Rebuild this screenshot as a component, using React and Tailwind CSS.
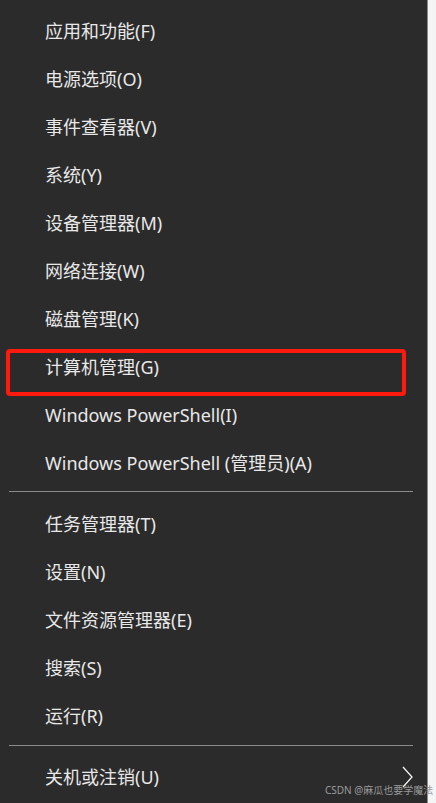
const groupA = [
  '应用和功能(F)',
  '电源选项(O)',
  '事件查看器(V)',
  '系统(Y)',
  '设备管理器(M)',
  '网络连接(W)',
  '磁盘管理(K)',
  '计算机管理(G)',
  'Windows PowerShell(I)',
  'Windows PowerShell (管理员)(A)',
]

const groupB = ['任务管理器(T)', '设置(N)', '文件资源管理器(E)', '搜索(S)', '运行(R)']

function Item({ label, children }) {
  return (
    <div className="relative h-[48px] flex items-center pl-[45px] text-[18px] text-[#e8e8e8]">
      <span>{label}</span>
      {children}
    </div>
  )
}

export default function App() {
  return (
    <div
      className="relative w-[436px] h-[803px] flex overflow-hidden"
      style={{ fontFamily: '"Noto Sans", "Noto Sans CJK SC", sans-serif' }}
    >
      <div className="relative w-[427px] h-full bg-[#2b2b2b] pt-[7px]">
        {groupA.map((t) => (
          <Item key={t} label={t} />
        ))}
        <div className="mt-[4px] mb-[8px] ml-[9px] w-[404px] h-px bg-[#8a8a8a]" />
        {groupB.map((t) => (
          <Item key={t} label={t} />
        ))}
        <div className="mt-[5px] mb-[7px] ml-[9px] w-[404px] h-px bg-[#8a8a8a]" />
        <Item label="关机或注销(U)">
          <svg
            className="absolute left-[400px] top-[13px]"
            width="14"
            height="22"
            viewBox="0 0 14 22"
            fill="none"
          >
            <path d="M3 1 L12 11 L3 21" stroke="#f2f2f2" strokeWidth="1.3" />
          </svg>
        </Item>

        {/* red highlight */}
        <div className="absolute left-[6px] top-[349px] w-[400px] h-[47px] border-[4px] border-[#ff1a0d] rounded-[4px]" />
      </div>
      <div className="w-px h-full bg-[#8c8c8c]" />
      <div className="flex-1 h-full bg-[#f4f4f4]" />

      <div className="absolute z-10 left-[325px] top-[783px] text-[10px] leading-[14px] text-[#9a9a9a] whitespace-nowrap">
        CSDN @麻瓜也要学魔法
      </div>
    </div>
  )
}
